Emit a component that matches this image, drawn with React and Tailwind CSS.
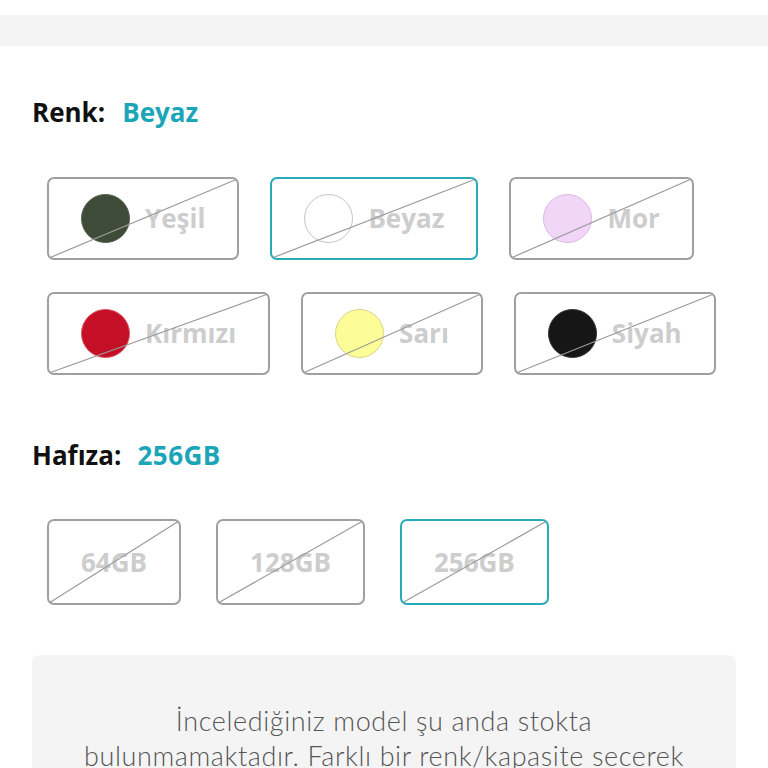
import React from 'react';

const colors = [
  { name: 'Yeşil', fill: 'bg-[#3e4b39]', ring: 'border-[#55604f]' },
  { name: 'Beyaz', fill: 'bg-white', ring: 'border-[#c4c4c4]', selected: true },
  { name: 'Mor', fill: 'bg-[#f1d6f8]', ring: 'border-[#dcb8e6]' },
  { name: 'Kırmızı', fill: 'bg-[#c40f26]', ring: 'border-[#d9505f]' },
  { name: 'Sarı', fill: 'bg-[#fdfd98]', ring: 'border-[#d8d68a]' },
  { name: 'Siyah', fill: 'bg-[#161616]', ring: 'border-[#333333]' },
];

const sizes = [
  { name: '64GB' },
  { name: '128GB' },
  { name: '256GB', selected: true },
];

function Strike() {
  return (
    <svg className="absolute inset-0 h-full w-full pointer-events-none" preserveAspectRatio="none" viewBox="0 0 100 100">
      <line x1="1" y1="99" x2="99" y2="1" stroke="#9a9a9a" strokeWidth="1.2" vectorEffect="non-scaling-stroke" />
    </svg>
  );
}

export default function App() {
  return (
    <div className="min-h-screen bg-white font-['Open_Sans','Lato',sans-serif]">
      <div className="h-[15px]" />
      <div className="h-[31px] bg-[#f4f4f4]" />

      <div className="px-8">
        <h2 className="mt-[50px] text-[26px] font-bold text-[#111] leading-[32px] flex gap-[17px]">
          <span>Renk:</span>
          <span className="text-[#1ba5b8]">Beyaz</span>
        </h2>

        <div className="mt-[49px] pl-[15px] flex flex-wrap gap-x-[31px] gap-y-[32px]">
          {colors.map((c) => (
            <div
              key={c.name}
              className={`relative h-[83px] flex items-center gap-[15px] px-[32px] rounded-[7px] border-2 ${c.selected ? 'border-[#27aab9]' : 'border-[#a0a0a0]'}`}
            >
              <span className={`w-[49px] h-[49px] rounded-full border ${c.fill} ${c.ring}`} />
              <span className="text-[26px] font-bold text-[#cdcdcd]">{c.name}</span>
              <Strike />
            </div>
          ))}
        </div>

        <h2 className="mt-[64px] text-[26px] font-bold text-[#111] leading-[32px] flex gap-[16px]">
          <span>Hafıza:</span>
          <span className="text-[#1ba5b8] tracking-[0.5px]">256GB</span>
        </h2>

        <div className="mt-[48px] pl-[15px] flex gap-[35px]">
          {sizes.map((s) => (
            <div
              key={s.name}
              className={`relative h-[86px] flex items-center justify-center px-[32px] rounded-[7px] border-2 ${s.selected ? 'border-[#27aab9]' : 'border-[#a0a0a0]'}`}
            >
              <span className="text-[26px] font-bold text-[#cdcdcd]">{s.name}</span>
              <Strike />
            </div>
          ))}
        </div>

        <div className="mt-[50px] rounded-[8px] bg-[#f4f4f4] px-6 pt-[48px] pb-10 text-center">
          <p className="text-[27px] font-light leading-[35px] text-[#555] font-['Lato','Open_Sans',sans-serif] tracking-[0.6px]">
            İncelediğiniz model şu anda stokta
            <br />
            bulunmamaktadır. Farklı bir renk/kapasite secerek
            <br />
            devam edebilirsiniz.
          </p>
        </div>
      </div>
    </div>
  );
}
